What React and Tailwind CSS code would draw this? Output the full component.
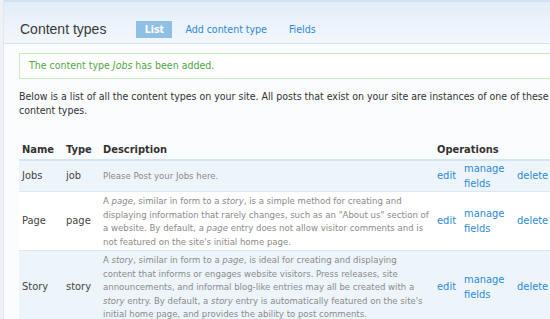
import React from "react";

const rows = [
  {
    name: "Jobs",
    type: "job",
    desc: <>Please Post your Jobs here.</>,
    bg: "bg-[#edf5fb]",
  },
  {
    name: "Page",
    type: "page",
    desc: (
      <>
        A <em>page</em>, similar in form to a <em>story</em>, is a simple method for creating and
        displaying information that rarely changes, such as an "About us" section of a website. By
        default, a <em>page</em> entry does not allow visitor comments and is not featured on the
        site's initial home page.
      </>
    ),
    bg: "bg-white",
  },
  {
    name: "Story",
    type: "story",
    desc: (
      <>
        A <em>story</em>, similar in form to a <em>page</em>, is ideal for creating and displaying
        content that informs or engages website visitors. Press releases, site announcements, and
        informal blog-like entries may all be created with a <em>story</em> entry. By default, a{" "}
        <em>story</em> entry is automatically featured on the site's initial home page, and provides
        the ability to post comments.
      </>
    ),
    bg: "bg-[#edf5fb]",
  },
];

export default function App() {
  return (
    <div
      className="w-[550px] h-[319px] overflow-hidden flex bg-white"
      style={{ fontFamily: '"DejaVu Sans Condensed", "DejaVu Sans", sans-serif' }}
    >
      <div className="w-[4px] shrink-0 bg-[#eef2f6] border-r border-[#e2e8ee]" />
      <div className="w-[620px] shrink-0 bg-[#fbfcfd]">
        <div className="h-[44px] flex items-center pl-[16px] pt-[12px] border-t-2 border-t-[#cfe1f2] border-b border-b-[#d6e0ea] bg-gradient-to-b from-[#e2edf8] to-[#f3f7fb]">
          <h1
            className="text-[14px] leading-[18px] text-[#3a3a3a] mr-[30px]"
            style={{ fontFamily: '"Liberation Sans", Arial, sans-serif' }}
          >
            Content types
          </h1>
          <div className="flex items-center text-[10.5px] mt-[2px]">
            <span className="w-[36px] h-[17px] flex items-center justify-center bg-[#8fbfe2] text-white font-bold mr-[13px]">
              List
            </span>
            <a className="text-[#2a8ad8] mr-[22px]">Add content type</a>
            <a className="text-[#2a8ad8]">Fields</a>
          </div>
        </div>

        <div className="pl-[15px]">
          <div className="mt-[9px] h-[26px] border border-[#c6eec1] bg-white flex items-center pl-[9px] text-[10.5px] text-[#4fa842]">
            The content type&nbsp;<em>Jobs</em>&nbsp;has been added.
          </div>

          <p className="mt-[10px] w-[536px] text-[10.5px] leading-[14px] text-[#333]">
            Below is a list of all the content types on your site. All posts that exist on your site
            are instances of one of these content types.
          </p>

          <table className="mt-[24px] table-fixed w-[600px] border-collapse text-[11px] text-[#444]">
            <colgroup>
              <col className="w-[44px]" />
              <col className="w-[37px]" />
              <col className="w-[334px]" />
              <col className="w-[27px]" />
              <col className="w-[53px]" />
              <col />
            </colgroup>
            <thead>
              <tr className="border-b-2 border-[#d3e6f4]">
                <th className="text-left font-bold text-[#333] px-[3px] h-[19px]">Name</th>
                <th className="text-left font-bold text-[#333] px-[3px]">Type</th>
                <th className="text-left font-bold text-[#333] px-[3px]">Description</th>
                <th colSpan={3} className="text-left font-bold text-[#333] px-[3px]">
                  Operations
                </th>
              </tr>
            </thead>
            <tbody>
              {rows.map((r) => (
                <tr key={r.name} className={`${r.bg} border-b border-[#d8e8f5]`}>
                  <td className="px-[3px] align-middle">{r.name}</td>
                  <td className="px-[3px] align-middle">{r.type}</td>
                  <td className="px-[3px] py-[2px] text-[9.5px] leading-[13.5px] text-[#8a8a8a]">
                    {r.desc}
                  </td>
                  <td className="px-[3px] text-[#2a8ad8]">edit</td>
                  <td className="px-[3px] text-[#2a8ad8] leading-[15px]">
                    manage
                    <br />
                    fields
                  </td>
                  <td className="px-[3px] text-[#2a8ad8]">delete</td>
                </tr>
              ))}
            </tbody>
          </table>
        </div>
      </div>
    </div>
  );
}
